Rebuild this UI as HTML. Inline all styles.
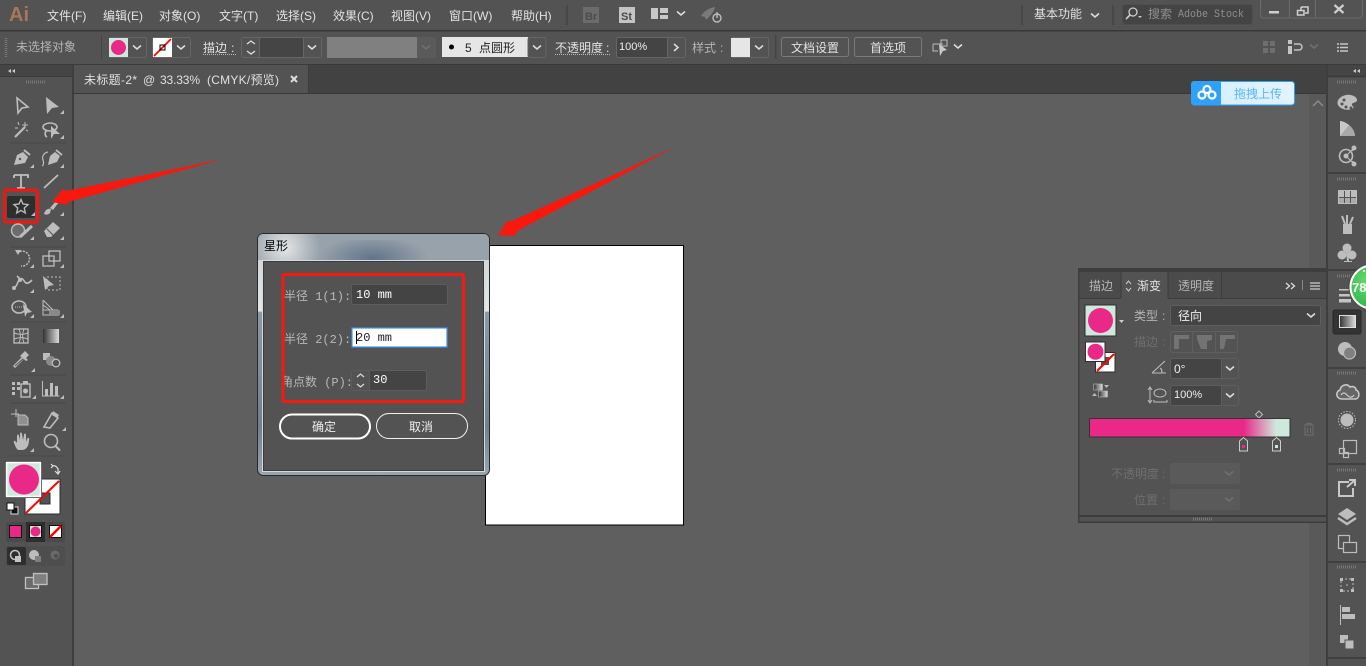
<!DOCTYPE html>
<html><head><meta charset="utf-8"><title>Illustrator</title>
<style>
html,body{margin:0;padding:0;background:#535353;width:1366px;height:666px;overflow:hidden}
svg{display:block;position:absolute;left:0;top:0}
text{font-family:"Liberation Sans","Noto Sans CJK SC",sans-serif;font-size:12px;fill:#dcdcdc}
.m{fill:#e2e2e2}
.g{fill:#b4b4b4}
.d{fill:#6f6f6f}
.s{font-family:"Liberation Mono","WenQuanYi Zen Hei",serif;fill:#b8b8b8}
.w{font-family:"Liberation Mono","Noto Serif CJK SC",serif;fill:#fff}
.ic{fill:#bdbdbd;stroke:none}
.il{fill:none;stroke:#bdbdbd;stroke-width:1.6}
.ch{fill:none;stroke:#e0e0e0;stroke-width:1.5}
.chd{fill:none;stroke:#707070;stroke-width:1.5}
.box{fill:none;stroke:#666;stroke-width:1}
</style></head><body>
<svg width="1366" height="666" viewBox="0 0 1366 666" xmlns="http://www.w3.org/2000/svg">
<defs>
<linearGradient id="bar" x1="0" x2="1" y1="0" y2="0"><stop offset="0" stop-color="#e92888"/><stop offset=".77" stop-color="#e92888"/><stop offset=".93" stop-color="#cfe7dc"/><stop offset="1" stop-color="#cde8dc"/></linearGradient>
<linearGradient id="tool" x1="0" x2="1"><stop offset="0" stop-color="#333"/><stop offset="1" stop-color="#ddd"/></linearGradient>
<linearGradient id="side" x1="0" x2="0" y1="0" y2="1"><stop offset="0" stop-color="#c8cdd0"/><stop offset=".32" stop-color="#e4e7e8"/><stop offset=".326" stop-color="#8b99a5"/><stop offset=".8" stop-color="#6f8090"/><stop offset="1" stop-color="#9aa6b0"/></linearGradient>
<radialGradient id="gd" gradientUnits="userSpaceOnUse" cx="373" cy="258" r="55" gradientTransform="translate(0 150) scale(1 .42)"><stop offset="0" stop-color="#61748a"/><stop offset="1" stop-color="#61748a" stop-opacity="0"/></radialGradient>
<radialGradient id="gl" gradientUnits="userSpaceOnUse" cx="285" cy="248" r="35"><stop offset="0" stop-color="#e4e6e6"/><stop offset="1" stop-color="#e4e6e6" stop-opacity="0"/></radialGradient>
<linearGradient id="up" x1="0" x2="1"><stop offset="0" stop-color="#d2edff"/><stop offset="1" stop-color="#e2f4ff"/></linearGradient>
<radialGradient id="green" cx=".4" cy=".35" r=".7"><stop offset="0" stop-color="#67d96f"/><stop offset="1" stop-color="#2fb54a"/></radialGradient>
<path id="chev" d="M-4-1.5 0 2 4-1.5"/>
<g id="tri"><path d="M0 4 4 4 4 0Z" fill="#bdbdbd"/></g>
</defs>

<!-- base -->
<rect width="1366" height="666" fill="#535353"/>
<rect x="0" y="30" width="1366" height="1.5" fill="#383838"/>
<rect x="0" y="64" width="1366" height="1.5" fill="#3a3a3a"/>

<!-- menu bar -->
<text x="9" y="21" style="font-size:20px;font-weight:bold;fill:#a8775a">Ai</text>
<text class="m" x="47" y="20">文件(F)</text>
<text class="m" x="103" y="20">编辑(E)</text>
<text class="m" x="159" y="20">对象(O)</text>
<text class="m" x="219" y="20">文字(T)</text>
<text class="m" x="276" y="20">选择(S)</text>
<text class="m" x="333" y="20">效果(C)</text>
<text class="m" x="391" y="20">视图(V)</text>
<text class="m" x="449" y="20">窗口(W)</text>
<text class="m" x="511" y="20">帮助(H)</text>
<rect x="566" y="5" width="2" height="20" fill="#484848"/>
<rect x="583" y="7" width="16" height="16" fill="#6b6b6b"/>
<text x="585" y="20" style="font-size:11px;font-weight:bold;fill:#4c4c4c">Br</text>
<rect x="619" y="7" width="16" height="16" fill="#c4c4c4"/>
<text x="621" y="20" style="font-size:11px;font-weight:bold;fill:#4a4a4a">St</text>
<path d="M651 8h7v11h-7zM660 8h8v5h-8zM660 15h8v4h-8z" fill="#c8c8c8"/>
<use href="#chev" x="681" y="13" class="ch"/>
<path d="M701 16c3-5 8-8 14-9-1 4-3 7-6 10l-3 3-1-3z" fill="#7a7a7a"/>
<circle cx="717" cy="18" r="4" fill="none" stroke="#bbb" stroke-width="1.4"/><path d="M717 12v6" stroke="#bbb" stroke-width="1.4"/>
<rect x="1021" y="5" width="2" height="20" fill="#484848"/>
<text class="m" x="1034" y="18">基本功能</text>
<use href="#chev" x="1095" y="15" class="ch"/>
<rect x="1112" y="5" width="2" height="20" fill="#484848"/>
<rect x="1122.5" y="4.5" width="130" height="20" rx="3" fill="#444" stroke="#4e4e4e"/>
<circle cx="1133" cy="12" r="4" fill="none" stroke="#ccc" stroke-width="1.3"/><path d="M1130 15 1126 19" stroke="#ccc" stroke-width="1.6"/><path d="M1138 16h4l-2 2z" fill="#ccc"/>
<text x="1148" y="18" style="fill:#8f8f8f">搜索</text>
<text x="1178" y="17" textLength="66" lengthAdjust="spacingAndGlyphs" style="font-family:'Liberation Mono',monospace;font-size:11px;fill:#8f8f8f">Adobe Stock</text>
<path d="M1260.5 0v15a3 3 0 0 0 3 3h96a3 3 0 0 0 3-3V0M1289.5 0v18M1315.500 0v18" fill="none" stroke="#6a6a6a"/>
<rect x="1269" y="11" width="10" height="2.5" fill="#cfcfcf"/>
<path d="M1301 7h7v6h-3M1301 7v3M1297.500 10.500h6.500v4.500h-6.500z" fill="none" stroke="#cfcfcf" stroke-width="1.5"/>
<path d="M1334.500 5 1343.500 13M1343.500 5 1334.500 13" stroke="#cfcfcf" stroke-width="2.200"/>

<!-- control bar -->
<path d="M6 38v19" stroke="#777" stroke-width="2.500" stroke-dasharray="1 1"/>
<text x="16" y="51" class="g">未选择对象</text>
<rect x="101" y="35" width="1" height="24" fill="#444"/>
<rect x="109.500" y="37.500" width="37" height="20" rx="2" class="box"/>
<rect x="109" y="38" width="19" height="19" fill="#cde8dc"/><circle cx="118.500" cy="47.500" r="7.500" fill="#e92888"/>
<use href="#chev" x="137" y="47" class="ch"/>
<rect x="152.500" y="37.500" width="38" height="20" rx="2" class="box"/>
<rect x="153" y="38" width="19" height="19" fill="#fff"/><path d="M154 56 171 39" stroke="#f00" stroke-width="1.800"/><rect x="160" y="45" width="5" height="5" fill="none" stroke="#000"/>
<use href="#chev" x="181" y="47" class="ch"/>
<text x="203" y="52" class="m">描边</text><text x="231" y="52" class="m">:</text>
<path d="M203 54.500h33" stroke="#bbb" stroke-dasharray="1 1"/>
<rect x="241.500" y="37.500" width="80" height="20" rx="2" fill="#454545" stroke="#666"/>
<rect x="242" y="38" width="17" height="19" fill="#535353"/><path d="M259.500 38v19M303.500 38v19" stroke="#666"/>
<path d="M247 44 251 41 255 44M247 51 251 54 255 51" fill="none" stroke="#ddd" stroke-width="1.300"/>
<rect x="304" y="38" width="17" height="19" fill="#535353"/>
<use href="#chev" x="312" y="47" class="ch"/>
<rect x="327" y="37" width="90" height="21" fill="#808080"/>
<rect x="417" y="37" width="19" height="21" fill="#5a5a5a"/>
<use href="#chev" x="426" y="47" class="chd"/>
<rect x="442" y="37" width="86" height="20" fill="#e6e6e6"/>
<circle cx="451.500" cy="47" r="2.500" fill="#000"/>
<text x="465" y="52" style="fill:#222">5</text><text x="479" y="52" style="fill:#222">点圆形</text>
<rect x="528" y="37.500" width="18" height="20" rx="2" fill="#535353" stroke="#666"/>
<use href="#chev" x="537" y="47" class="ch"/>
<text x="555" y="52" class="m">不透明度</text><text x="606" y="52" class="m">:</text>
<path d="M555 54.500h55" stroke="#bbb" stroke-dasharray="1 1"/>
<rect x="616.500" y="37.500" width="69" height="20" rx="2" fill="#444" stroke="#666"/>
<rect x="668" y="38" width="17" height="19" fill="#535353"/><path d="M667.500 38v19" stroke="#666"/>
<text x="619" y="50" style="font-size:11px;fill:#eee">100%</text>
<path d="M674 44 678 47.500 674 51" class="ch"/>
<text x="692" y="52" class="g">样式</text><text x="720" y="52" class="g">:</text>
<rect x="731.500" y="37.500" width="37" height="20" rx="2" class="box"/>
<rect x="731" y="38" width="19" height="19" fill="#e6e6e6"/>
<use href="#chev" x="759" y="47" class="ch"/>
<rect x="775" y="35" width="1.500" height="24" fill="#444"/>
<rect x="781.500" y="37.500" width="67" height="19" rx="2" fill="none" stroke="#7a7a7a"/>
<text x="791" y="52" class="m">文档设置</text>
<rect x="854.500" y="37.500" width="67" height="19" rx="2" fill="none" stroke="#7a7a7a"/>
<text x="870" y="52" class="m">首选项</text>
<path d="M933 44h10M933 44v7h5M941 40h6v6h-6z" fill="none" stroke="#bbb"/><path d="M939 44 947 50 943 51 940 56z" fill="#c8c8c8"/>
<use href="#chev" x="958" y="46" class="ch"/>
<path d="M1263 41h5v5h-5zM1270 41h5v5h-5zM1263 48h5v5h-5zM1270 48h5v5h-5z" fill="#6e6e6e"/>
<path d="M1288 40h4v4h-4zM1288 46h4v4h-4zM1288 50h4v4h-4z" fill="#c4c4c4"/><path d="M1294 44h5a3 3 0 0 1 0 6h-5" fill="none" stroke="#c4c4c4" stroke-width="1.500"/>
<use href="#chev" x="1314" y="46" class="chd"/>
<path d="M1337 44h2M1337 47.500h2M1337 51h2M1340 44h8M1340 47.500h8M1340 51h8" stroke="#c8c8c8" stroke-width="1.400"/>

<!-- tab bar and canvas -->
<rect x="74" y="65" width="1253" height="29" fill="#424242"/>
<rect x="74" y="65" width="234" height="28" fill="#535353"/>
<rect x="308" y="65" width="1" height="28" fill="#3c3c3c"/>
<rect x="74" y="93" width="1253" height="1" fill="#383838"/>
<rect x="74" y="94" width="1253" height="572" fill="#5f5f5f"/>
<rect x="1309" y="94" width="17" height="572" fill="#595959"/>
<path d="M1313 106 1318 101 1323 106" class="chd" style="stroke:#8a8a8a"/>
<rect x="72" y="65" width="2" height="601" fill="#3e3e3e"/>
<text x="84" y="84" textLength="53" style="fill:#e0e0e0">未标题-2*</text>
<text x="143" y="84" style="fill:#e0e0e0">@</text>
<text x="160" y="84" textLength="40" style="fill:#e0e0e0">33.33%</text>
<text x="207" y="84" textLength="72" style="fill:#e0e0e0">(CMYK/预览)</text>
<path d="M291 76 297 82M297 76 291 82" stroke="#ddd" stroke-width="2"/>

<!-- artboard -->
<rect x="485.500" y="245.500" width="198" height="279.500" fill="#fff" stroke="#000"/>

<!-- left toolbar -->
<rect x="0" y="65" width="72" height="601" fill="#535353"/>
<rect x="0" y="65" width="72" height="11" fill="#454545"/>
<rect x="0" y="76" width="72" height="1" fill="#3a3a3a"/>
<path d="M11 69 8 71 11 73zM15 69 12 71 15 73z" fill="#ccc"/>
<path d="M26 82h19" stroke="#777" stroke-width="3" stroke-dasharray="1 1"/>
<path d="M10 143h56M10 247h56M10 322h56M10 375h56M10 403h56M10 456h56" stroke="#494949"/>
<!-- row 1 -->
<path d="M17 98 28 107 22 108 18 113Z" class="il"/>
<path d="M46 97 59 107 52 108 47 114Z" class="ic"/>
<use href="#tri" x="60" y="110"/>
<path d="M15 137 25 127" stroke="#bdbdbd" stroke-width="2.200"/><path d="M25 122v6M22 125h6M18 122l1 3M15 128h3M28 131l-2-1" stroke="#bdbdbd"/>
<ellipse cx="50" cy="127" rx="7" ry="4" class="il"/><path d="M47 130c-3 3-2 6 0 7" class="il"/><path d="M51 126 60 134 54 134 51 139z" class="ic"/>
<use href="#tri" x="60" y="135"/>
<!-- pen row -->
<path d="M14 165 17 155 23 152 28 157 25 163Z" class="ic"/><path d="M24 150 30 155" stroke="#bdbdbd" stroke-width="2"/><circle cx="20" cy="159" r="1.200" fill="#535353"/>
<use href="#tri" x="30" y="164"/>
<path d="M48 165 50 156 55 152 60 156 57 162Z" class="ic"/><path d="M56 150 62 155" stroke="#bdbdbd" stroke-width="1.800"/><path d="M48 152c-5 1-6 5-5 8 1 3 1 5-1 6" class="il" style="stroke-width:1.200"/>
<use href="#tri" x="60" y="164"/>
<!-- T line -->
<path d="M14 175h14v3M21 175v13M17 188h8M14 175v3" fill="none" stroke="#c0c0c0" stroke-width="1.800"/>
<path d="M44 188 58 175" stroke="#bdbdbd" stroke-width="1.800"/>
<!-- star selected -->
<rect x="7" y="196" width="28" height="22" rx="2" fill="#2e2e2e"/>
<path d="M21 199.500 23 204 28 204.600 24.300 208 25.300 213 21 210.400 16.700 213 17.700 208 14 204.600 19 204Z" fill="none" stroke="#b8b8b8" stroke-width="1.400"/>
<use href="#tri" x="31" y="212"/>
<rect x="4.500" y="190" width="33" height="32" rx="2" fill="none" stroke="#f5140f" stroke-width="3"/>
<!-- brush -->
<path d="M44 214c1-4 4-6 7-5l-1 4c-2 2-4 2-6 1z" class="ic"/><path d="M50 208 57 200 59 202 53 210z" class="ic"/>
<use href="#tri" x="60" y="212"/>
<!-- shaper eraser -->
<circle cx="18" cy="230.500" r="6.500" fill="#6c6c6c" stroke="#bdbdbd" stroke-width="1.400"/><path d="M20 237 32 226" stroke="#bdbdbd" stroke-width="3"/>
<use href="#tri" x="30" y="236"/>
<path d="M44 231 53 222 60 228 51 237 47 237Z" class="ic"/><path d="M47 229 54 236" stroke="#535353"/>
<use href="#tri" x="60" y="236"/>
<!-- rotate scale -->
<path d="M17 253a7.500 7.500 0 1 1 4 13" fill="none" stroke="#bdbdbd" stroke-width="1.500" stroke-dasharray="2 1.200"/><path d="M15 250h6l-3 5z" class="ic"/>
<use href="#tri" x="30" y="264"/>
<rect x="43" y="256" width="11" height="10" class="il" style="stroke-width:1.300"/><rect x="49" y="251" width="11" height="10" class="il" style="stroke-width:1.300"/>
<use href="#tri" x="60" y="264"/>
<!-- warp, free transform -->
<path d="M14 288c4-2 3-7 6-9s4 3 6 4 4-1 6-3" class="il"/><circle cx="14" cy="288" r="2" class="ic"/><circle cx="20" cy="280" r="2" class="ic"/><path d="M17 276l3 3" class="il"/>
<use href="#tri" x="30" y="289"/>
<path d="M43 276 54 285 49 286 45 290Z" class="ic"/><rect x="47" y="277" width="13" height="13" fill="none" stroke="#bdbdbd" stroke-dasharray="2 2"/>
<!-- shape builder, perspective -->
<ellipse cx="19" cy="307" rx="7" ry="6" class="il"/><path d="M15 307h9" stroke="#bdbdbd" stroke-dasharray="1 1"/><path d="M23 304 32 312 27 313 25 317z" class="ic"/>
<use href="#tri" x="30" y="314"/>
<path d="M43 300v15h16M43 300 53 310M43 305l7 5v5M43 310h15" fill="none" stroke="#bdbdbd"/>
<path d="M50 310h10v5h-10z" fill="#8a8a8a"/>
<use href="#tri" x="60" y="314"/>
<!-- mesh gradient -->
<rect x="14" y="329" width="14" height="14" class="il" style="stroke-width:1.300"/><path d="M14 333c5 2 9 2 14 0M14 339c5-2 9-2 14 0M19 329c2 5 2 9 0 14M24 329c-2 5-2 9 0 14" fill="none" stroke="#bdbdbd"/>
<rect x="43" y="329" width="16" height="14" fill="url(#tool)"/>
<!-- dropper, blend -->
<path d="M14 367 24 357" stroke="#bdbdbd" stroke-width="3"/><path d="M15 366 24 358" stroke="#535353"/><path d="M22 354 25 351 29 355 26 358 28 360 26 361 20 356Z" class="ic"/>
<use href="#tri" x="31" y="368"/>
<rect x="43" y="353" width="7" height="7" class="ic"/><circle cx="51" cy="361" r="5" fill="#8a8a8a"/><circle cx="56" cy="363" r="3.800" fill="#535353" stroke="#bdbdbd" stroke-width="1.300"/>
<!-- symbol, graph -->
<path d="M12 382h3v3h-3zM17 382h3v3h-3zM12 387h3v3h-3zM17 387h3v3h-3zM12 392h3v3h-3z" class="ic"/>
<rect x="21" y="384" width="9" height="13" class="il" style="stroke-width:1.400"/><circle cx="25.500" cy="391" r="2.500" class="ic"/><rect x="23" y="381" width="5" height="3" class="ic"/>
<use href="#tri" x="32" y="395"/>
<path d="M42.500 381v15h17" fill="none" stroke="#bdbdbd"/><path d="M45 389h3v7h-3zM50 383h3v13h-3zM55 386h3v10h-3z" class="ic"/>
<use href="#tri" x="60" y="395"/>
<!-- artboard slice -->
<path d="M16 409v8M11 414h8" stroke="#bdbdbd"/><path d="M18 415h7l3 3v7H18Z" fill="#8f8f8f" stroke="#bdbdbd"/>
<path d="M44 427 52 413 56 415 58 418 50 428Z" class="il"/><path d="M53 411 59 415 57 418 52 415Z" class="ic"/>
<use href="#tri" x="62" y="427"/>
<!-- hand, zoom -->
<path d="M14 443c-1-3 1-3 3 0l0-7c0-2 2-2 2 0l1 4 0-6c0-2 2-2 2 0l1 6 1-5c0-2 2-2 2 0l0 7 1-3c1-2 3-1 2 1 0 5-2 10-7 10h-3c-2 0-3-2-5-7z" class="ic"/>
<use href="#tri" x="30" y="448"/>
<circle cx="51" cy="441" r="6.500" class="il"/><path d="M55.500 446 60 450.500" stroke="#bdbdbd" stroke-width="2"/>
<!-- fill & stroke -->
<rect x="25" y="479" width="35" height="35" fill="#fff" stroke="#2c2c2c"/>
<rect x="40" y="493" width="10" height="11" fill="#535353" stroke="#2c2c2c"/>
<path d="M26 513 59 481" stroke="#f00" stroke-width="2"/>
<rect x="5.500" y="461.500" width="36" height="36" fill="#2e2e2e" stroke="#2e2e2e"/>
<rect x="6.500" y="462.500" width="34" height="34" fill="#cde8dc" stroke="#fff" stroke-width="1.600"/>
<circle cx="24" cy="479.500" r="15" fill="#e92888"/>
<path d="M52 466c3-1 5 1 6 3M58 474v-6M55 471l3 3 2-3M51 464l2 2-2 2" fill="none" stroke="#ddd" stroke-width="1.200"/>
<rect x="11" y="507" width="7" height="7" fill="#111" stroke="#ddd"/><rect x="7" y="503" width="7" height="7" fill="#fff" stroke="#111"/>
<!-- color modes -->
<rect x="6" y="522" width="59" height="20" fill="#4a4a4a" rx="1"/>
<rect x="26" y="522" width="19" height="20" fill="#2e2e2e"/>
<rect x="9.500" y="525.500" width="12" height="12" fill="#e92888" stroke="#111"/>
<rect x="29.500" y="525.500" width="12" height="12" fill="#cde8dc" stroke="#111"/><circle cx="35.500" cy="531.500" r="5" fill="#e92888"/>
<rect x="49.500" y="525.500" width="12" height="12" fill="#fff" stroke="#111"/><path d="M50 537 61 526" stroke="#f00" stroke-width="2.500"/>
<!-- draw modes -->
<rect x="6" y="546" width="59" height="20" rx="2" fill="#4e4e4e"/>
<rect x="7" y="547" width="19" height="18" rx="2" fill="#2e2e2e"/>
<circle cx="15" cy="555" r="4.500" fill="none" stroke="#c4c4c4" stroke-width="1.500"/><rect x="15" y="556" width="6" height="6" fill="#c4c4c4"/>
<circle cx="34" cy="555" r="4.500" fill="#bdbdbd" stroke="#bdbdbd"/><rect x="35" y="556" width="6" height="6" fill="#808080"/>
<circle cx="55" cy="555" r="4.500" fill="#6a6a6a"/><circle cx="56" cy="556" r="2" fill="#4e4e4e"/>
<!-- screen mode -->
<rect x="25.500" y="577.500" width="13" height="11" fill="#6a6a6a" stroke="#c0c0c0" stroke-width="1.300"/><rect x="33.500" y="573.500" width="13.500" height="11" fill="#808080" stroke="#c0c0c0" stroke-width="1.300"/>

<!-- right dock -->
<rect x="1326" y="65" width="2" height="601" fill="#3e3e3e"/>
<rect x="1328" y="65" width="38" height="601" fill="#535353"/>
<rect x="1328" y="65" width="38" height="11" fill="#454545"/>
<path d="M1356 69 1353 71 1356 73zM1360 69 1357 71 1360 73z" fill="#ccc"/>
<path d="M1328 76.500h38M1328 173h38M1328 270h38M1328 368h38M1328 464h38M1328 562h38M1328 658h38" stroke="#3a3a3a" stroke-width="1.500"/>
<g stroke="#777" stroke-width="3" stroke-dasharray="1 1"><path d="M1337 82h19M1337 179h19M1337 276h19M1337 373h19M1337 470h19M1337 567h19"/></g>
<!-- palette -->
<path d="M1338 105c-2-5 3-9 8-10 6-1 11 2 11 5 0 3-4 2-5 4s4 3 0 5c-5 2-12 0-14-4z" class="ic"/>
<g fill="#535353"><circle cx="1342" cy="104" r="1.500"/><circle cx="1346" cy="107" r="1.500"/><circle cx="1351" cy="108" r="1.500"/><circle cx="1344" cy="100" r="1.500"/></g>
<!-- color guide -->
<path d="M1340 121v15h15c0-7-7-14-15-15z" fill="#a8a8a8"/><path d="M1340 121v15l9-11c-3-2-6-4-9-4z" fill="#c8c8c8"/>
<!-- kuler -->
<circle cx="1346" cy="156" r="6.500" class="il"/><circle cx="1346" cy="156" r="2.500" class="ic"/><path d="M1352 151 1354 149M1352 161 1354 163M1346 156 1353 149M1346 156 1353 163" stroke="#bdbdbd"/><circle cx="1354" cy="148" r="2.500" class="ic"/><circle cx="1354" cy="164" r="2.500" class="ic"/>
<!-- swatches -->
<path d="M1339 191h5v6h-5zM1345 191h5v6h-5zM1351 191h5v6h-5z" fill="#bdbdbd"/><path d="M1339 198h5v5h-5zM1345 198h5v5h-5zM1351 198h5v5h-5z" fill="#aaa"/>
<rect x="1338.500" y="190.500" width="18" height="13" fill="none" stroke="#bdbdbd"/>
<!-- brushes -->
<path d="M1343 224h9v10h-9z" class="ic"/><path d="M1345 224 1342 216M1347 224v-9M1350 224l3-7" stroke="#bdbdbd" stroke-width="2"/>
<!-- club -->
<circle cx="1347" cy="248" r="4.500" class="ic"/><circle cx="1342" cy="255" r="4.500" class="ic"/><circle cx="1352" cy="255" r="4.500" class="ic"/><path d="M1346 252h2l1 9h3v1h-8v-1h3z" class="ic"/>
<!-- stroke -->
<path d="M1339 289h12v1.500h-12z M1339 294h12v2.500h-12z M1339 299h12v3.500h-12z" fill="#c4c4c4"/>
<!-- gradient selected -->
<rect x="1333" y="310" width="28" height="24" rx="2" fill="#333" stroke="#2a2a2a"/>
<rect x="1339.500" y="315.500" width="16" height="12" fill="url(#tool)" stroke="#ddd"/>
<!-- transparency -->
<circle cx="1345" cy="349" r="7" fill="#bdbdbd"/><circle cx="1349.500" cy="353" r="6" fill="#808080" stroke="#bdbdbd" stroke-width="1.200"/>
<!-- CC -->
<path d="M1342 399c-6 0-7-7-2-9 1-5 7-7 10-3 3-1 6 0 6 3 4 1 4 9-1 9z" fill="#666" stroke="#c8c8c8" stroke-width="1.600"/><path d="M1341 395c3-4 5-1 7 1 2 2 5 1 6-1" fill="none" stroke="#c8c8c8" stroke-width="1.200"/>
<!-- appearance -->
<circle cx="1347" cy="420" r="6.500" fill="#bdbdbd"/><circle cx="1347" cy="420" r="8.500" fill="none" stroke="#bdbdbd" stroke-dasharray="1.500 1.500"/>
<!-- graphic styles -->
<rect x="1343.500" y="440.500" width="13" height="13" class="il" style="stroke-width:1.200"/><rect x="1339.500" y="448.500" width="5" height="5" class="il" style="stroke-width:1.200"/><rect x="1343.500" y="452.500" width="5" height="5" class="il" style="stroke-width:1.200"/>
<!-- export -->
<path d="M1349 482h-10v14h14v-8" fill="none" stroke="#c8c8c8" stroke-width="2"/><path d="M1347 487 1354 481M1349 480h6v6" fill="none" stroke="#c8c8c8" stroke-width="2"/>
<!-- layers -->
<path d="M1347 508 1356 514 1347 520 1338 514Z" class="ic"/><path d="M1338 518 1347 524 1356 518" fill="none" stroke="#bdbdbd" stroke-width="2.400"/>
<!-- artboards -->
<rect x="1338.500" y="535.500" width="11" height="13" class="il" style="stroke-width:1.200"/><rect x="1343.500" y="542.500" width="13" height="10" fill="#535353" stroke="#bdbdbd" stroke-width="1.200"/>
<!-- transform -->
<rect x="1341" y="579" width="12" height="12" fill="none" stroke="#bdbdbd" stroke-dasharray="2 2"/><path d="M1340 578h3v3h-3zM1351 578h3v3h-3zM1340 589h3v3h-3zM1351 589h3v3h-3z" class="ic"/><circle cx="1347" cy="585" r=".800" class="ic"/>
<!-- align -->
<path d="M1340.500 605v20" stroke="#bdbdbd"/><rect x="1342" y="607" width="8" height="5" class="ic"/><rect x="1342" y="614" width="13" height="5" class="ic"/>
<!-- pathfinder -->
<rect x="1340" y="635" width="8" height="8" class="ic"/><rect x="1345" y="640" width="9" height="9" fill="#bdbdbd" stroke="#535353"/>

<!-- gradient panel -->
<rect x="1078" y="268" width="249" height="255" fill="#535353"/>
<rect x="1078" y="268" width="249" height="4" fill="#3e3e3e"/>
<rect x="1079" y="272" width="247" height="26" fill="#4b4b4b"/>
<rect x="1121" y="272" width="47" height="27" fill="#535353"/>
<path d="M1079 298.500h42M1168 298.500h158M1121 272v26M1168 272v26M1221.500 272v26" stroke="#3e3e3e"/>
<rect x="1078" y="268" width="1.500" height="255" fill="#3e3e3e"/>
<rect x="1326" y="268" width="1" height="255" fill="#3e3e3e"/>
<rect x="1078" y="515" width="249" height="2" fill="#3c3c3c"/>
<rect x="1078" y="521.500" width="249" height="1.500" fill="#3c3c3c"/>
<path d="M1193 519h19" stroke="#777" stroke-width="3" stroke-dasharray="1 1"/>
<text x="1089" y="290" class="g">描边</text>
<path d="M1126 284 1128.500 281 1131 284M1126 288 1128.500 291 1131 288" fill="none" stroke="#ccc"/>
<text x="1137" y="290" class="m">渐变</text>
<text x="1178" y="290" class="g">透明度</text>
<path d="M1286 283 1289.500 286 1286 289M1291 283 1294.500 286 1291 289" fill="none" stroke="#ddd" stroke-width="1.300"/>
<path d="M1302.500 280v10" stroke="#888"/>
<path d="M1310 283h10M1310 286h10M1310 289h10" stroke="#ccc" stroke-width="1.200"/>
<rect x="1085" y="305" width="31" height="31" fill="#cde8dc" stroke="#2e2e2e"/>
<circle cx="1100.500" cy="320.500" r="12.500" fill="#e92888"/>
<path d="M1119 320h5l-2.500 3z" fill="#ccc"/>
<rect x="1095.500" y="352.500" width="19.500" height="19.500" fill="#fff" stroke="#2e2e2e"/>
<rect x="1101" y="357" width="8" height="8" fill="#535353"/>
<path d="M1097 371 1114 354" stroke="#f00" stroke-width="2"/>
<rect x="1085.500" y="342" width="19.500" height="19.500" fill="#fff" stroke="#2e2e2e"/>
<circle cx="1095.500" cy="351.700" r="8" fill="#e92888"/>
<rect x="1093.500" y="384" width="9" height="6" fill="url(#tool)" stroke="#bbb" stroke-width=".6"/><path d="M1104 385h5l-2.500 3z" fill="#bbb"/>
<rect x="1098.500" y="391" width="9" height="6" fill="url(#tool)" stroke="#bbb" stroke-width=".6"/><path d="M1092 396h5l-2.500-3z" fill="#bbb"/>
<text x="1134" y="320" class="g">类型</text><text x="1162" y="320" class="g">:</text>
<rect x="1170.500" y="305.500" width="150" height="20" rx="2" fill="#444" stroke="#5e5e5e"/>
<text x="1178" y="320" style="fill:#eee">径向</text>
<use href="#chev" x="1311" y="315" class="ch"/>
<text x="1134" y="346" class="d">描边</text><text x="1162" y="346" class="d">:</text>
<rect x="1170.500" y="331.500" width="67" height="21" rx="2" fill="none" stroke="#5f5f5f"/>
<path d="M1192.500 332v20M1215.500 332v20" stroke="#5f5f5f"/>
<path d="M1174 335h15v4h-10v10h-5z" fill="#737373"/><path d="M1197 335h15v5l-5 1v8h-6l-4-10z" fill="#737373"/><path d="M1220 335h15v4h-9l-2 10h-4z" fill="#737373"/>
<path d="M1152 373 1165 361M1152 373h14M1160 368c2 1 2 3 2 5" fill="none" stroke="#bdbdbd" stroke-width="1.100"/>
<rect x="1170.500" y="358.500" width="68" height="20" rx="2" fill="#444" stroke="#5e5e5e"/>
<rect x="1222" y="359" width="16" height="19" fill="#535353"/><path d="M1221.500 359v19" stroke="#5e5e5e"/>
<text x="1174" y="373" style="fill:#eee">0°</text>
<use href="#chev" x="1230" y="368" class="ch"/>
<path d="M1150 388v14M1148 390l2-3 2 3M1148 400l2 3 2-3" fill="none" stroke="#bdbdbd"/><ellipse cx="1160" cy="393" rx="6" ry="4" fill="none" stroke="#bdbdbd"/><path d="M1154 400v2h13v-2" fill="none" stroke="#bdbdbd"/>
<rect x="1170.500" y="385.500" width="68" height="20" rx="2" fill="#444" stroke="#5e5e5e"/>
<rect x="1222" y="386" width="16" height="19" fill="#535353"/><path d="M1221.500 386v19" stroke="#5e5e5e"/>
<text x="1174" y="398" style="fill:#eee;font-size:11px">100%</text>
<use href="#chev" x="1230" y="395" class="ch"/>
<path d="M1259 411 1262.500 414.500 1259 418 1255.500 414.500Z" fill="none" stroke="#bbb"/>
<rect x="1089.500" y="418.500" width="200.500" height="18.500" fill="url(#bar)" stroke="#333"/>
<path d="M1239.500 441 1243.500 437.500 1247.500 441V451H1239.500Z" fill="#535353" stroke="#ccc"/><rect x="1242" y="445" width="3" height="3" fill="#e92888"/>
<path d="M1272.500 441 1276.500 437.500 1280.500 441V451H1272.500Z" fill="#535353" stroke="#ccc"/><rect x="1275" y="445" width="3" height="3" fill="#cde8dc"/>
<path d="M1304 425h10M1307 425v-1.500h4v1.500M1305 426.500v8.500h8v-8.500M1307.500 428v5M1310.500 428v5" fill="none" stroke="#6f6f6f"/>
<text x="1111" y="478" class="d">不透明度</text><text x="1162" y="478" class="d">:</text>
<rect x="1170" y="463" width="70" height="21" rx="2" fill="#5a5a5a"/>
<use href="#chev" x="1229" y="473" class="chd"/>
<text x="1134" y="504" class="d">位置</text><text x="1162" y="504" class="d">:</text>
<rect x="1170" y="489" width="70" height="21" rx="2" fill="#5a5a5a"/>
<use href="#chev" x="1229" y="499" class="chd"/>

<!-- green badge -->
<circle cx="1372" cy="287" r="23" fill="#fff" stroke="#4a4a4a"/>
<circle cx="1372" cy="287" r="20.500" fill="url(#green)"/>
<circle cx="1364" cy="271" r="1" fill="#fff"/>
<text x="1352" y="292" style="font-size:13px;font-weight:bold;fill:#fff">78</text>

<!-- upload widget -->
<rect x="1191.500" y="81.500" width="103" height="23.500" rx="3" fill="url(#up)" stroke="#2ea1fb"/>
<path d="M1194 81h27v24h-27a3 3 0 0 1-3-3V84a3 3 0 0 1 3-3z" fill="#2ea1fb"/>
<g fill="none" stroke="#fff" stroke-width="2.200"><circle cx="1202" cy="95" r="3.500"/><circle cx="1212" cy="95" r="3.500"/><circle cx="1207" cy="89.500" r="3.500"/></g>
<text x="1234" y="98" style="fill:#5fb5f5">拖拽上传</text>

<!-- dialog -->
<rect x="257.500" y="233.500" width="232" height="242" rx="6" fill="url(#side)" stroke="#2a2a2a"/>
<path d="M258 260V239a5 5 0 0 1 5-5h221a5 5 0 0 1 5 5v21Z" fill="#97a2ab"/>
<path d="M258 260V239a5 5 0 0 1 5-5h221a5 5 0 0 1 5 5v21Z" fill="url(#gl)"/>
<path d="M300 260 320 240 430 240 450 260Z" fill="url(#gd)"/>
<rect x="263" y="261" width="221" height="210" fill="#535353"/>
<rect x="262.500" y="260.500" width="222" height="211" fill="none" stroke="#d4dadd"/>
<rect x="263.500" y="261.500" width="220" height="209" fill="none" stroke="#3c3c3c"/>
<text x="264" y="250" style="fill:#000">星形</text>
<text class="s" x="284" y="300">半径 1(1):</text>
<rect x="351.500" y="284.500" width="96" height="20" rx="2" fill="#444" stroke="#5c5c5c"/>
<text class="w" x="356" y="298">10 mm</text>
<text class="s" x="284" y="343">半径 2(2):</text>
<rect x="352" y="328" width="95" height="19" fill="#fff" stroke="#3b94e8" stroke-width="1.200"/>
<path d="M356.500 331v13" stroke="#000"/>
<text class="w" x="356" y="341" style="fill:#222">20 mm</text>
<text class="s" x="281" y="386">角点数 (P):</text>
<rect x="351.500" y="370.500" width="75" height="20" rx="2" fill="#444" stroke="#5c5c5c"/>
<rect x="352" y="371" width="17" height="19" fill="#535353"/><path d="M369.500 371v19" stroke="#5c5c5c"/>
<path d="M357 377 360.500 374 364 377M357 384 360.500 387 364 384" fill="none" stroke="#ddd" stroke-width="1.200"/>
<text class="w" x="373" y="383">30</text>
<rect x="283" y="274.500" width="180.500" height="127" rx="1" fill="none" stroke="#f5190f" stroke-width="3"/>
<rect x="280" y="414.500" width="90" height="24" rx="12" fill="none" stroke="#fff" stroke-width="2"/>
<text x="312" y="431" style="fill:#eee">确定</text>
<rect x="376.500" y="413.500" width="91" height="25" rx="12.500" fill="none" stroke="#f0f0f0"/>
<text x="409" y="431" style="fill:#eee">取消</text>

<!-- red arrows -->
<path d="M223 159 66 191 63 189 52 202 67 205 68 202Z" fill="#f8180e"/>
<path d="M675 147 512 221 507 221 498 235 514 236 519 230Z" fill="#f8180e"/>
</svg>
</body></html>
